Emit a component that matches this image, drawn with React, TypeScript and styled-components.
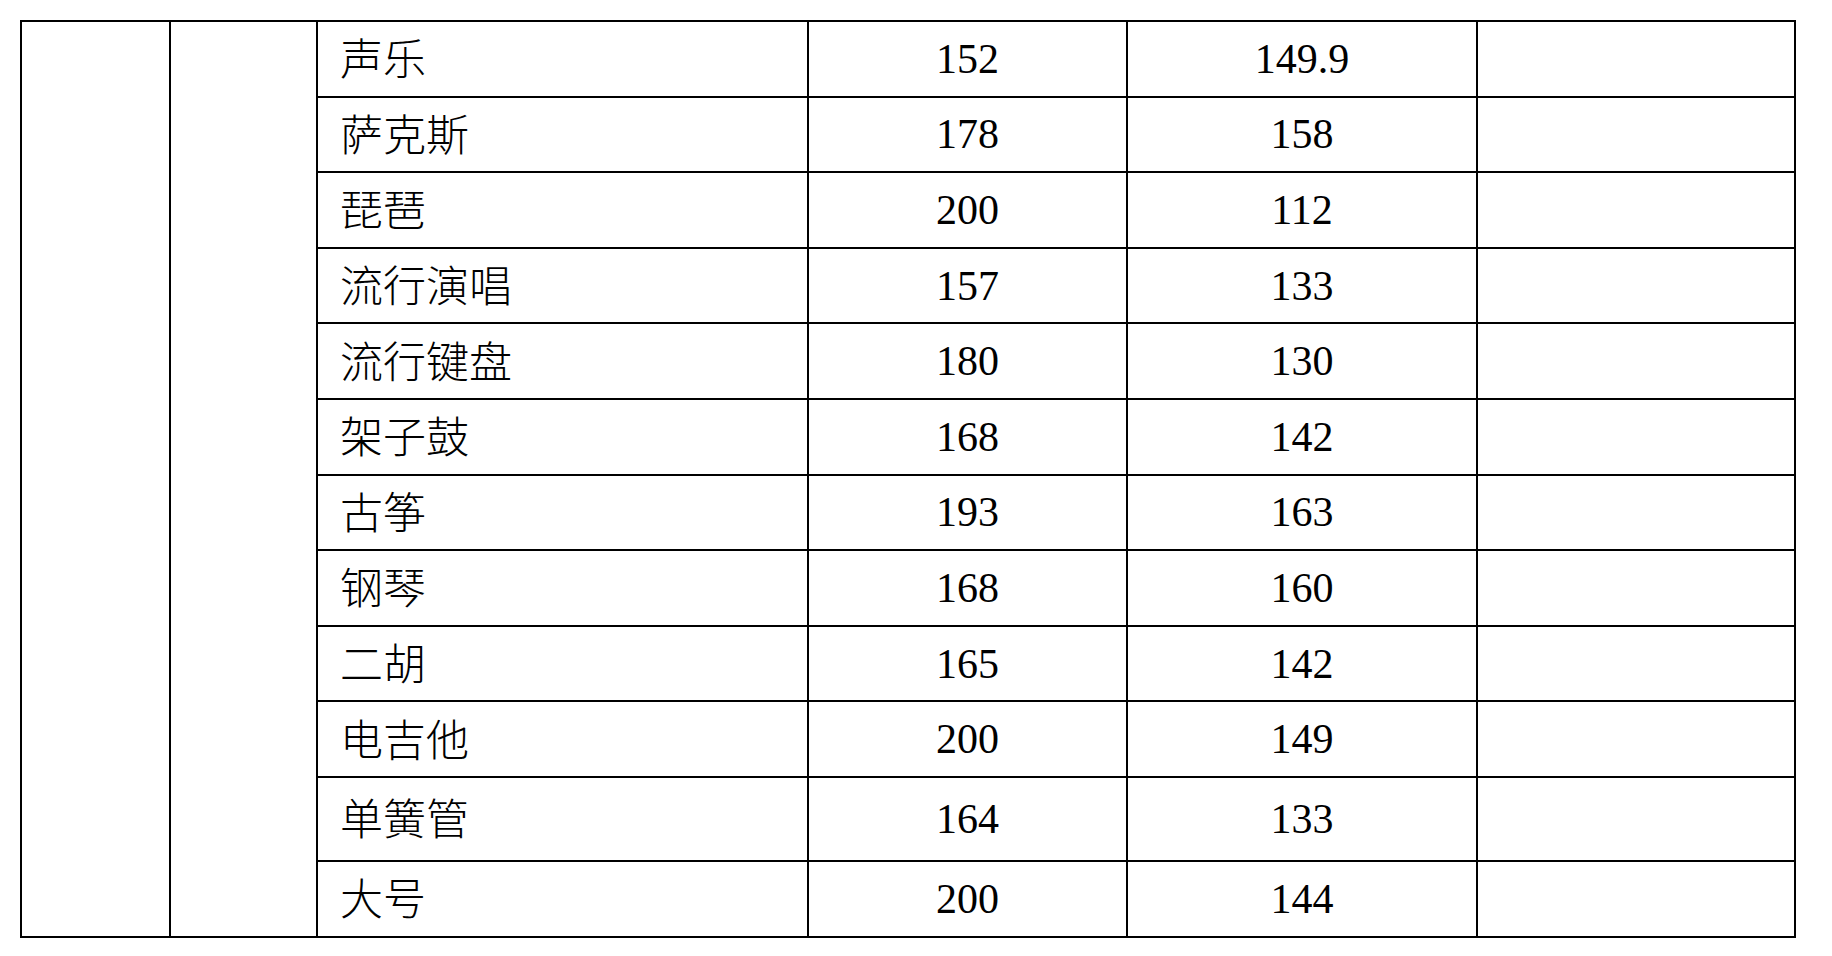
import React from 'react';
import styled, { createGlobalStyle } from 'styled-components';

const GlobalStyle = createGlobalStyle`
  html, body {
    margin: 0;
    padding: 0;
    background: #ffffff;
  }
  body {
    font-family: "Liberation Serif", "Noto Sans CJK SC", serif;
    color: #000000;
  }
`;

const Page = styled.div`
  width: 1832px;
  height: 956px;
  padding: 20px 0 0 20px;
  box-sizing: border-box;
  background: #ffffff;
`;

// black background + 2px gaps draw the ruled lines of the table
const Sheet = styled.div`
  display: grid;
  grid-template-columns: 147px 145px 489px 317px 348px 316px;
  grid-template-rows: repeat(10, 73.6px) 82px 74px;
  gap: 2px;
  padding: 2px;
  width: max-content;
  background: #000000;
`;

const BlankCell = styled.div<{ col: number }>`
  grid-column: ${p => p.col};
  grid-row: 1 / span 12;
  background: #ffffff;
`;

const Cell = styled.div`
  display: flex;
  align-items: center;
  background: #ffffff;
  font-size: 42px;
  line-height: 1;
  color: #000000;
`;

const NameCell = styled(Cell)`
  padding: 0 0 4px 22px;
  font-family: "Noto Sans CJK SC", sans-serif;
  font-size: 43px;
  font-weight: 300;
`;

const NumCell = styled(Cell)`
  justify-content: center;
  font-family: "Liberation Serif", serif;
`;

const EmptyCell = styled(Cell)``;

const rows: [string, string, string][] = [
  ['声乐', '152', '149.9'],
  ['萨克斯', '178', '158'],
  ['琵琶', '200', '112'],
  ['流行演唱', '157', '133'],
  ['流行键盘', '180', '130'],
  ['架子鼓', '168', '142'],
  ['古筝', '193', '163'],
  ['钢琴', '168', '160'],
  ['二胡', '165', '142'],
  ['电吉他', '200', '149'],
  ['单簧管', '164', '133'],
  ['大号', '200', '144'],
];

export default function App() {
  return (
    <>
      <GlobalStyle />
      <Page>
        <Sheet>
          <BlankCell col={1} />
          <BlankCell col={2} />
          {rows.map(([name, a, b]) => (
            <React.Fragment key={name}>
              <NameCell>{name}</NameCell>
              <NumCell>{a}</NumCell>
              <NumCell>{b}</NumCell>
              <EmptyCell />
            </React.Fragment>
          ))}
        </Sheet>
      </Page>
    </>
  );
}
